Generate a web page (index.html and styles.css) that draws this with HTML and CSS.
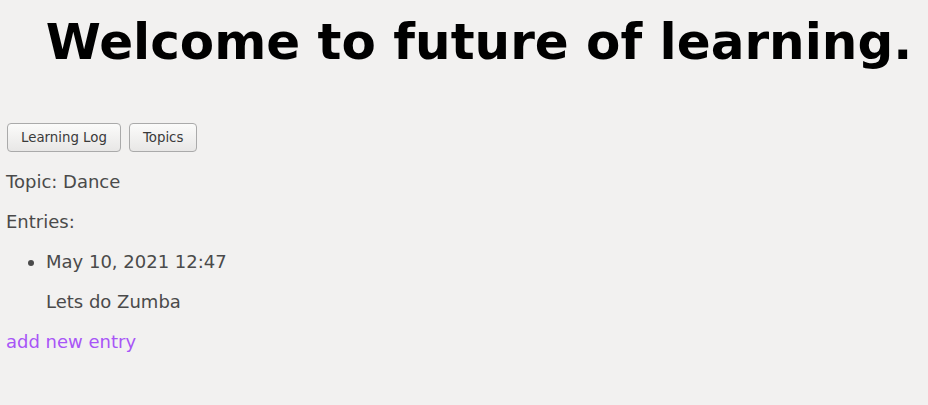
FILE: index.html
```html
<!DOCTYPE html>
<html>
<head>
<meta charset="utf-8">
<link rel="stylesheet" href="styles.css">
</head>
<body>
<h1 class="title">Welcome to future of learning.</h1>
<nav class="nav">
  <button class="btn">Learning Log</button>
  <button class="btn">Topics</button>
</nav>
<p class="text">Topic: Dance</p>
<p class="text">Entries:</p>
<ul class="entries">
  <li class="entry">
    <p class="text">May 10, 2021 12:47</p>
    <p class="text">Lets do Zumba</p>
  </li>
</ul>
<a class="link" href="#">add new entry</a>
</body>
</html>
```
FILE: styles.css
```css
html, body {
  background: #f2f1f0;
}
body {
  margin: 0;
  padding: 0 6px;
  font-family: "DejaVu Sans", sans-serif;
  font-size: 18px;
  color: #4a4a4a;
}
.title {
  font-family: "DejaVu Sans", sans-serif;
  font-weight: bold;
  font-size: 50px;
  color: #000;
  text-align: center;
  margin: 12px 0 0 30px;
  line-height: 60px;
  white-space: nowrap;
}
.nav {
  display: flex;
  gap: 8px;
  margin-top: 51px;
  padding-left: 1px;
}
.btn {
  font-family: "DejaVu Sans", sans-serif;
  font-size: 13.33px;
  color: #3a3a3a;
  height: 29px;
  padding: 0 13px;
  border: 1px solid #aaa;
  border-radius: 4px;
  background: linear-gradient(#fbfbfa, #e8e7e6);
}
.text {
  margin: 18px 0;
  line-height: 22px;
}
.nav + .text {
  margin-top: 19px;
}
.entries {
  margin: 0;
  padding-left: 40px;
}
.link {
  display: block;
  color: #a855f7;
  text-decoration: none;
  line-height: 22px;
}
```
